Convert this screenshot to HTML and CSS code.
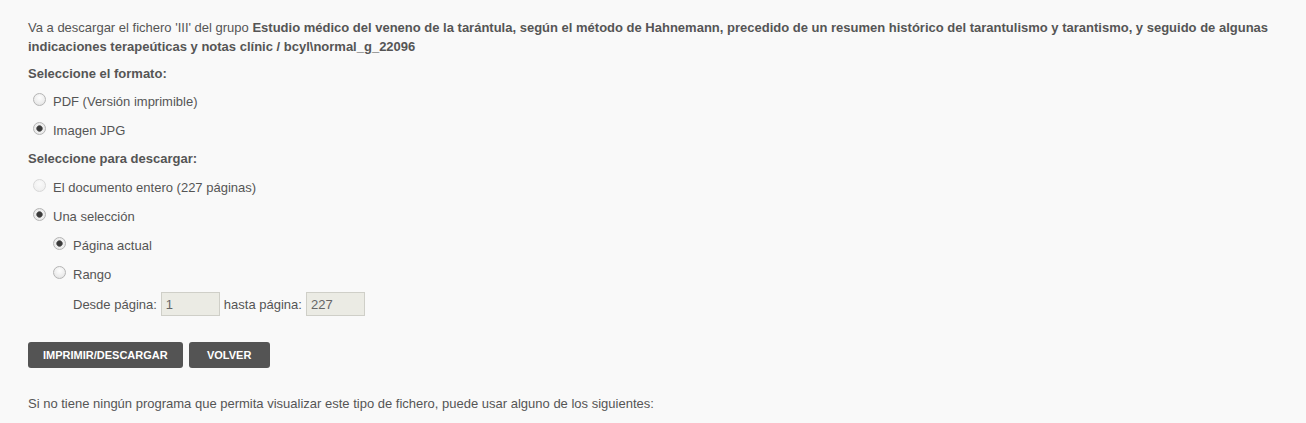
FILE: index.html
```html
<!DOCTYPE html>
<html lang="es">
<head>
<meta charset="utf-8">
<title>Descargar</title>
<link rel="stylesheet" href="styles.css">
</head>
<body>
<div class="page">
  <p class="intro">Va a descargar el fichero 'III' del grupo <b>Estudio médico del veneno de la tarántula, según el método de Hahnemann, precedido de un resumen histórico del tarantulismo y tarantismo, y seguido de algunas indicaciones terapeúticas y notas clínic / bcyl\normal_g_22096</b></p>

  <div class="heading">Seleccione el formato:</div>
  <label class="opt"><input type="radio" name="fmt"> PDF (Versión imprimible)</label>
  <label class="opt last"><input type="radio" name="fmt" checked> Imagen JPG</label>

  <div class="heading heading-wide">Seleccione para descargar:</div>
  <label class="opt"><input type="radio" name="sel" disabled> El documento entero (227 páginas)</label>
  <label class="opt"><input type="radio" name="sel" checked> Una selección</label>
  <div class="sub">
    <label class="opt"><input type="radio" name="sub" checked> Página actual</label>
    <label class="opt"><input type="radio" name="sub"> Rango</label>
    <div class="range">
      <span>Desde página:</span>
      <input class="num" type="text" value="1" disabled>
      <span>hasta página:</span>
      <input class="num" type="text" value="227" disabled>
    </div>
  </div>

  <div class="buttons">
    <button class="btn">Imprimir/Descargar</button>
    <button class="btn btn-back">Volver</button>
  </div>

  <p class="note">Si no tiene ningún programa que permita visualizar este tipo de fichero, puede usar alguno de los siguientes:</p>
</div>
</body>
</html>
```

FILE: styles.css
```css
html, body {
  margin: 0;
  padding: 0;
  background: #f9f9f9;
}
body {
  font-family: "Liberation Sans", Arial, sans-serif;
  font-size: 13px;
  line-height: 19px;
  color: #555;
}
.page {
  padding: 18px 28px 0 28px;
}
.intro {
  margin: 0 0 8px 0;
}
.intro b {
  font-weight: bold;
}
.heading {
  font-weight: bold;
  margin-bottom: 9px;
}
.heading-wide {
  margin-bottom: 10px;
}
.opt {
  display: flex;
  align-items: center;
  height: 19px;
  margin-bottom: 10px;
}
.opt.last {
  margin-bottom: 9px;
}
.opt input[type="radio"] {
  appearance: none;
  -webkit-appearance: none;
  width: 13px;
  height: 13px;
  margin: 0 7px 0 5px;
  border-radius: 50%;
  border: 1px solid #b5b5b5;
  background: radial-gradient(circle at 50% 35%, #fefefe 0%, #ececec 60%, #dcdcdc 100%);
  position: relative;
  top: -2px;
  flex: none;
  box-sizing: border-box;
}
.opt input[type="radio"]:checked {
  background: radial-gradient(circle, #3a3a3a 0, #3a3a3a 2.2px, #7a7a7a 3px, #efefef 3.6px, #e4e4e4 100%);
}
.opt input[type="radio"]:disabled {
  border-color: #d8d8d8;
  background: radial-gradient(circle at 50% 35%, #fafafa 0%, #f0f0f0 70%, #e8e8e8 100%);
}
.sub {
  padding-left: 20px;
}
.range {
  display: flex;
  align-items: center;
  gap: 4px;
  padding-left: 25px;
  margin-top: -2px;
}
.num {
  width: 59px;
  height: 24px;
  box-sizing: border-box;
  border: 1px solid #cfcfc8;
  background: #ebebe4;
  color: #666;
  font-family: "Liberation Sans", Arial, sans-serif;
  font-size: 13px;
  padding: 0 4px;
  margin: 0;
}
.buttons {
  display: flex;
  gap: 6px;
  margin-top: 26px;
}
.btn {
  background: #545454;
  color: #fff;
  border: none;
  border-radius: 3px;
  height: 26px;
  padding: 0 15px;
  font-family: "Liberation Sans", Arial, sans-serif;
  font-size: 11px;
  font-weight: bold;
  text-transform: uppercase;
  cursor: pointer;
}
.btn-back {
  min-width: 81px;
}
.note {
  margin: 26px 0 0 0;
}
```
